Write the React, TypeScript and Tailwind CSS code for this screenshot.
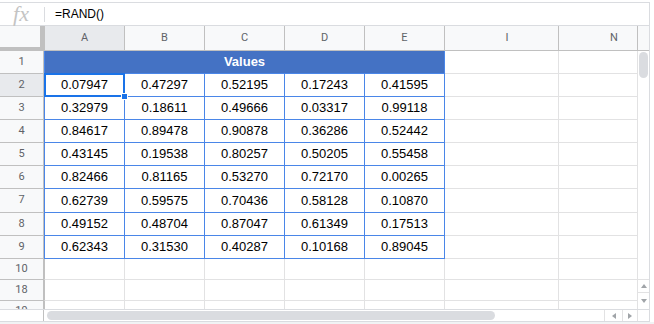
import { clsx } from "clsx";

const COLS = [
  { name: "A", w: "w-[81px]" },
  { name: "B", w: "w-[80px]" },
  { name: "C", w: "w-[80px]" },
  { name: "D", w: "w-[80px]" },
  { name: "E", w: "w-[80px]" },
];

const EXTRA = [
  { name: "I", w: "w-[114px]", pad: "pl-[11px]" },
  { name: "N", w: "w-[79px]", pad: "pl-[32px]" },
];

const DATA = [
  ["0.07947", "0.47297", "0.52195", "0.17243", "0.41595"],
  ["0.32979", "0.18611", "0.49666", "0.03317", "0.99118"],
  ["0.84617", "0.89478", "0.90878", "0.36286", "0.52442"],
  ["0.43145", "0.19538", "0.80257", "0.50205", "0.55458"],
  ["0.82466", "0.81165", "0.53270", "0.72170", "0.00265"],
  ["0.62739", "0.59575", "0.70436", "0.58128", "0.10870"],
  ["0.49152", "0.48704", "0.87047", "0.61349", "0.17513"],
  ["0.62343", "0.31530", "0.40287", "0.10168", "0.89045"],
];

// row 8 is one pixel taller in the capture
const DATA_H = ["h-[23px]", "h-[23px]", "h-[23px]", "h-[23px]", "h-[23px]", "h-[24px]", "h-[23px]", "h-[23px]"];

const hdrText = "font-['Roboto',Arial,sans-serif] text-[11px] text-[#5f6368]";

function RowHeader({ label, active }: { label: string; active?: boolean }) {
  return (
    <div
      className={clsx(
        "w-[44px] h-full shrink-0 flex items-center justify-center border-r border-b border-[#c0c0c0]",
        active ? "bg-[#e8eaed]" : "bg-[#f8f9fa]",
        hdrText,
      )}
    >
      {label}
    </div>
  );
}

function EmptyCells() {
  return (
    <>
      {EXTRA.map((c) => (
        <div key={c.name} className={clsx(c.w, "h-full shrink-0 border-r border-b border-[#e2e2e3]")} />
      ))}
    </>
  );
}

function EmptyRow({ label, h }: { label: string; h: string }) {
  return (
    <div className={clsx("flex shrink-0", h)}>
      <RowHeader label={label} />
      {COLS.map((c, i) => (
        <div
          key={c.name}
          className={clsx(
            c.w,
            "h-full shrink-0 border-r border-b border-[#e2e2e3]",
            i === 0 && "border-l border-l-[#c0c0c0]",
          )}
        />
      ))}
      <EmptyCells />
    </div>
  );
}

function Triangle({ dir }: { dir: "up" | "down" | "left" | "right" }) {
  const pts = {
    up: "0,4 3,0 6,4",
    down: "0,0 6,0 3,4",
    left: "4,0 4,6 0,3",
    right: "0,0 4,3 0,6",
  }[dir];
  const vert = dir === "up" || dir === "down";
  return (
    <svg width={vert ? 6 : 4} height={vert ? 4 : 6} viewBox={vert ? "0 0 6 4" : "0 0 4 6"}>
      <polygon points={pts} fill="#a0a4a8" />
    </svg>
  );
}

export default function App() {
  return (
    <div className="w-[654px] h-[324px] bg-white overflow-hidden font-['Liberation_Sans',Arial,sans-serif]">
      <div className="w-[650px] mt-[2px] border-t border-r border-[#dadce0] flex flex-col">
        {/* formula bar */}
        <div className="h-[23px] flex items-center border-b border-[#dadce0]">
          <div className="w-[44px] h-full flex items-center justify-center">
            <span className="font-['Liberation_Serif',serif] italic text-[22px] leading-none text-[#c4c4c4] pr-[2px]">fx</span>
          </div>
          <div className="w-px h-[15px] bg-[#dadce0]" />
          <span className="ml-[10px] text-[12px] text-black">=RAND()</span>
        </div>

        {/* grid */}
        <div className="flex h-[283px] overflow-hidden">
          <div className="w-[638px] flex flex-col">
            <div className="flex h-[25px] shrink-0">
              <div className="w-[44px] h-full shrink-0 bg-[#f8f9fa] border-r-4 border-b-4 border-[#c0c0c0]" />
              {COLS.map((c, i) => (
                <div
                  key={c.name}
                  className={clsx(
                    c.w,
                    "h-full shrink-0 flex items-center justify-center border-r border-b border-[#c0c0c0]",
                    i === 0 ? "border-l bg-[#e8eaed]" : "bg-[#f8f9fa]",
                    hdrText,
                  )}
                >
                  {c.name}
                </div>
              ))}
              {EXTRA.map((c) => (
                <div
                  key={c.name}
                  className={clsx(
                    c.w,
                    c.pad,
                    "h-full shrink-0 flex items-center justify-center border-r border-b border-[#c0c0c0] bg-[#f8f9fa]",
                    hdrText,
                  )}
                >
                  {c.name}
                </div>
              ))}
            </div>

            {/* row 1: merged title */}
            <div className="flex h-[23px] shrink-0">
              <RowHeader label="1" />
              <div className="w-[401px] h-full shrink-0 flex items-center justify-center bg-[#4472c4] border-l border-r border-b border-[#4a86e8] text-white font-bold text-[13px]">
                Values
              </div>
              <EmptyCells />
            </div>

            {DATA.map((row, r) => (
              <div key={r} className={clsx("flex shrink-0", DATA_H[r])}>
                <RowHeader label={String(r + 2)} active={r === 0} />
                {row.map((v, i) => (
                  <div
                    key={i}
                    className={clsx(
                      COLS[i].w,
                      "relative h-full shrink-0 flex items-center justify-center border-r border-b border-[#4a86e8] text-[13px] text-black",
                      i === 0 && "border-l",
                    )}
                  >
                    {v}
                    {r === 0 && i === 0 && (
                      <div className="absolute -inset-px border-2 border-[#1a73e8] z-10">
                        <div className="absolute -right-[5px] -bottom-[5px] w-[7px] h-[7px] bg-[#1a73e8] border border-white" />
                      </div>
                    )}
                  </div>
                ))}
                <EmptyCells />
              </div>
            ))}

            <EmptyRow label="10" h="h-[21px]" />
            <EmptyRow label="18" h="h-[21px]" />
            <EmptyRow label="19" h="h-[21px]" />
          </div>

          {/* vertical scrollbar */}
          <div className="w-[11px] flex flex-col">
            <div className="h-[25px] shrink-0 bg-[#f8f9fa] border-b border-[#c0c0c0]" />
            <div className="h-[228px] shrink-0">
              <div className="mt-px mx-px h-[26px] rounded-full bg-[#dadce0]" />
            </div>
            <div className="h-[13px] shrink-0 border-t border-[#e2e2e3] flex items-center justify-center">
              <Triangle dir="up" />
            </div>
            <div className="h-[17px] shrink-0 border-t border-[#e2e2e3] flex items-center justify-center">
              <Triangle dir="down" />
            </div>
          </div>
        </div>

        {/* horizontal scrollbar */}
        <div className="h-[13px] flex border-t border-b border-[#dadce0]">
          <div className="w-[44px] h-full border-r border-[#c0c0c0]" />
          <div className="w-[560px] h-full flex items-center">
            <div className="ml-[3px] w-[448px] h-[9px] rounded-full bg-[#dadce0]" />
          </div>
          <div className="w-[18px] h-full border-l border-[#e2e2e3] flex items-center justify-center">
            <Triangle dir="left" />
          </div>
          <div className="w-[15px] h-full border-l border-[#e2e2e3] flex items-center justify-center">
            <Triangle dir="right" />
          </div>
          <div className="w-[12px] h-full border-l border-[#e2e2e3]" />
        </div>
      </div>
      <div className="h-[2px] bg-[#f1f3f4]" />
    </div>
  );
}
